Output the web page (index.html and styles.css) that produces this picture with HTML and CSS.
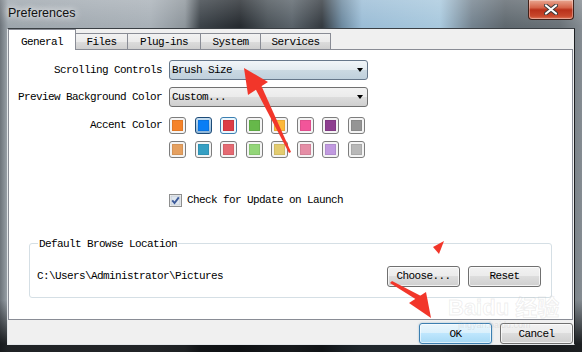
FILE: index.html
```html
<!DOCTYPE html>
<html lang="en">
<head>
  <meta charset="UTF-8">
  <title>Preferences</title>
  <link rel="stylesheet" href="styles.css">
</head>
<body>
  <div class="window">
    <div class="titlebar">
      <span class="title">Preferences</span>
      <div class="close">
        <svg width="14" height="11" viewBox="0 0 14 11">
          <path d="M2 1.5 L12 9.5 M12 1.5 L2 9.5" stroke="#3a3a3a" stroke-width="4" stroke-linecap="round"/>
          <path d="M2 1.5 L12 9.5 M12 1.5 L2 9.5" stroke="#fff" stroke-width="2.2" stroke-linecap="round"/>
        </svg>
      </div>
    </div>

    <div class="client">
      <div class="tabs">
        <div class="tab active">General</div>
        <div class="tab t-files">Files</div>
        <div class="tab t-plugins">Plug-ins</div>
        <div class="tab t-system">System</div>
        <div class="tab t-services">Services</div>
      </div>

      <div class="panel">
        <div class="row first">
          <label class="lbl">Scrolling Controls</label>
          <div class="combo hot"><span>Brush Size</span><i class="arrow"></i></div>
        </div>
        <div class="row second">
          <label class="lbl">Preview Background Color</label>
          <div class="combo"><span>Custom...</span><i class="arrow"></i></div>
        </div>
        <div class="row accent">
          <label class="lbl">Accent Color</label>
          <div class="swatches">
            <div class="sw"><i class="orange"></i></div>
            <div class="sw selected"><i class="blue"></i></div>
            <div class="sw hover"><i class="red"></i></div>
            <div class="sw"><i class="green"></i></div>
            <div class="sw"><i class="yellow"></i></div>
            <div class="sw"><i class="pink"></i></div>
            <div class="sw"><i class="purple"></i></div>
            <div class="sw"><i class="gray"></i></div>
            <div class="sw"><i class="orange-lt"></i></div>
            <div class="sw"><i class="teal"></i></div>
            <div class="sw"><i class="red-lt"></i></div>
            <div class="sw"><i class="green-lt"></i></div>
            <div class="sw"><i class="yellow-lt"></i></div>
            <div class="sw"><i class="pink-lt"></i></div>
            <div class="sw"><i class="purple-lt"></i></div>
            <div class="sw"><i class="gray-lt"></i></div>
          </div>
        </div>
        <div class="check">
          <svg width="13" height="13" viewBox="0 0 13 13">
            <rect x="0.5" y="0.5" width="12" height="12" fill="#f4f4f4" stroke="#8e8f8f"/>
            <rect x="2" y="2" width="9" height="9" fill="#dfe6ee" stroke="#b6bfca" stroke-width="0.6"/>
            <path d="M3.2 6.4 L5.5 9 L9.8 3.4" fill="none" stroke="#3c5a9a" stroke-width="1.9"/>
          </svg>
          <span>Check for Update on Launch</span>
        </div>

        <fieldset class="group">
          <legend>Default Browse Location</legend>
          <div class="browse">
            <span class="path">C:\Users\Administrator\Pictures</span>
            <button class="btn">Choose...</button>
            <button class="btn">Reset</button>
          </div>
        </fieldset>
      </div>

      <div class="footer">
        <button class="btn default">OK</button>
        <button class="btn">Cancel</button>
      </div>
    </div>

    <div class="watermark">Bai<b>du</b> 经验</div>
    <div class="watermark-url">jingyan.baidu.com</div>

    <!-- red annotation arrows drawn over the dialog -->
    <svg class="marks" width="582" height="352" viewBox="0 0 582 352">
      <polygon points="244,68 248,95 268,82" fill="#f2362a"/>
      <polygon points="255,88 261,85 291,152 289,153" fill="#f2362a"/>
      <polygon points="433,247 444,241 439,254" fill="#f2362a"/>
      <polygon points="390,283 392,281 421,296 417,300" fill="#f2362a"/>
      <polygon points="431,318 409,303 426,292" fill="#f2362a"/>
    </svg>
  </div>
</body>
</html>
```

FILE: styles.css
```css
body {
  margin: 0;
  background: #2a2f34;
}
.window {
  position: relative;
  width: 582px;
  height: 352px;
  box-sizing: border-box;
  padding: 0 7px 7px 7px;
  display: flex;
  flex-direction: column;
  overflow: hidden;
  background:
    linear-gradient(to bottom, rgba(255,255,255,0.18) 0, rgba(255,255,255,0) 26px, rgba(0,0,0,0) 300px, rgba(10,12,14,0.85) 344px),
    linear-gradient(to right, #6c737a 0, #9ea6ad 8px, #a9b1b8 150px, #8d959b 185px, #3c4349 200px, #262b30 240px, #4b5359 268px, #5a636a 292px, #343a40 322px, #6d8aa0 342px, #9bbdd6 362px, #a9c9de 440px, #74838f 472px, #5f686f 505px, #6a7278 560px, #858c92 582px);
}
.titlebar {
  height: 28px;
  flex: none;
  display: flex;
  justify-content: space-between;
  align-items: flex-start;
  padding-left: 1px;
}
.title {
  margin-top: 6px;
  font-family: "Liberation Sans", Arial, sans-serif;
  font-size: 12.5px;
  color: #111;
  text-shadow: 0 0 6px #fff, 0 0 10px rgba(255,255,255,0.8);
}
.close {
  width: 46px;
  height: 20px;
  box-sizing: border-box;
  margin-right: 1px;
  border: 1px solid #41211a;
  border-top: none;
  border-radius: 0 0 4px 4px;
  background: linear-gradient(#e9a791 0, #d56449 40%, #b9311a 52%, #c8482c 85%, #e07a5c 100%);
  box-shadow: inset 0 0 0 1px rgba(255,255,255,0.35);
  display: flex;
  justify-content: center;
  align-items: center;
}

.client {
  flex: 1;
  display: flex;
  flex-direction: column;
  background: #f0f0f0;
  border: 1px solid #e4e7ea;
  border-top-color: #3a3f44;
  border-right-color: #1c1f22;
  font-family: "Liberation Mono", monospace;
  font-size: 11px;
  letter-spacing: -0.6px;
  color: #000;
}

.tabs {
  height: 20px;
  flex: none;
  display: flex;
  align-items: flex-end;
  position: relative;
  z-index: 1;
}
.tab {
  height: 16px;
  box-sizing: border-box;
  border: 1px solid #898c95;
  border-bottom: none;
  border-left: none;
  background: linear-gradient(#f2f2f2 0, #ebebeb 50%, #dddddd 50%, #cfcfcf 100%);
  display: flex;
  justify-content: center;
  align-items: center;
  padding-top: 1px;
}
.tab.active {
  width: 68px;
  height: 21px;
  margin-bottom: -1px;
  border-left: 1px solid #898c95;
  background: #fff;
  padding-top: 3px;
}
.t-files { width: 52px; }
.t-plugins { width: 73px; }
.t-system { width: 60px; }
.t-services { width: 70px; }

.panel {
  height: 271px;
  flex: none;
  box-sizing: border-box;
  margin-right: 1px;
  border: 1px solid #898c95;
  background: #fff;
  display: flex;
  flex-direction: column;
}
.row {
  display: flex;
  align-items: center;
}
.row.first { margin-top: 10px; }
.row.second { margin-top: 7px; }
.row.accent {
  margin-top: 10px;
  align-items: flex-start;
}
.lbl {
  width: 153px;
  margin-right: 7px;
  text-align: right;
}
.accent .lbl { margin-top: 2px; }

.combo {
  width: 199px;
  height: 20px;
  box-sizing: border-box;
  border: 1px solid #707070;
  border-radius: 3px;
  padding: 0 4px 0 2px;
  background: linear-gradient(#f2f2f2 0, #ebebeb 50%, #dddddd 50%, #cfcfcf 100%);
  display: flex;
  justify-content: space-between;
  align-items: center;
}
.combo.hot {
  border-color: #66778a;
  background: linear-gradient(#f1f5f8 0, #e3ebf0 50%, #cbd9e2 50%, #bfd0dc 100%);
}
.arrow {
  width: 0;
  height: 0;
  border-top: 4px solid #000;
  border-left: 3.5px solid transparent;
  border-right: 3.5px solid transparent;
}

.swatches {
  display: grid;
  grid-template-columns: repeat(8, 17px);
  grid-auto-rows: 17px;
  column-gap: 8.5px;
  row-gap: 6.5px;
}
.sw {
  box-sizing: border-box;
  border: 1px solid #7d7d7d;
  border-radius: 3px;
  padding: 2px;
  background: #f4f4f4;
}
.sw i {
  display: block;
  height: 100%;
  box-shadow: inset 0 0 0 1px rgba(0,0,0,0.08);
}
.sw.selected {
  border-color: #1d4b77;
  background: linear-gradient(#c7def0, #8fb6d8);
}
.sw.hover {
  border-color: #3c7fb1;
  background: #eaf6fd;
}
.orange { background: #f5832a; }
.blue { background: #0a7ef5; }
.red { background: #dc3c46; }
.green { background: #66b84a; }
.yellow { background: #fdb83a; }
.pink { background: #f2559a; }
.purple { background: #8e3f90; }
.gray { background: #959595; }
.orange-lt { background: #e5a060; }
.teal { background: #359fc3; }
.red-lt { background: #e56a72; }
.green-lt { background: #93d679; }
.yellow-lt { background: #e3cc70; }
.pink-lt { background: #e58ea6; }
.purple-lt { background: #c19ae0; }
.gray-lt { background: #b8b8b8; }

.check {
  margin: 36px 0 0 160px;
  display: flex;
  align-items: center;
  gap: 5px;
}
.check svg { flex: none; }

.group {
  width: 523px;
  box-sizing: border-box;
  margin: 30px 0 0 20px;
  padding: 15px 10px 10px 7px;
  border: 1px solid #d5dfe5;
  border-radius: 3px;
}
.group legend {
  margin-left: 1px;
  padding: 0 1px;
  line-height: 14px;
}
.browse {
  display: flex;
  align-items: center;
  gap: 8px;
}
.path { flex: 1; }

.btn {
  width: 73px;
  height: 21px;
  box-sizing: border-box;
  border: 1px solid #707070;
  border-radius: 3px;
  background: linear-gradient(#f2f2f2 0, #ebebeb 50%, #dddddd 50%, #cfcfcf 100%);
  box-shadow: inset 0 0 0 1px rgba(255,255,255,0.7);
  font-family: "Liberation Mono", monospace;
  font-size: 11px;
  letter-spacing: -0.6px;
  color: #000;
  padding: 0;
}
.btn.default {
  border-color: #3c7fb1;
  background: linear-gradient(#eaf6fd 0, #d9f0fc 50%, #bee6fd 50%, #a7d9f5 100%);
  box-shadow: inset 0 0 0 1px rgba(255,255,255,0.6), 0 0 2px rgba(60,127,177,0.5);
}

.footer {
  flex: 1;
  display: flex;
  justify-content: flex-end;
  align-items: flex-start;
  gap: 8px;
  padding: 3px 1px 0 0;
}

.watermark {
  position: absolute;
  left: 448px;
  top: 296px;
  font-family: "Liberation Sans", "Noto Sans CJK SC", sans-serif;
  font-size: 22px;
  line-height: 24px;
  font-weight: bold;
  color: rgba(255,255,255,0.15);
  -webkit-text-stroke: 1px rgba(160,160,160,0.18);
  pointer-events: none;
  white-space: nowrap;
}
.watermark-url {
  position: absolute;
  left: 458px;
  top: 320px;
  font-family: "Liberation Sans", sans-serif;
  font-size: 9px;
  line-height: 10px;
  color: rgba(170,170,170,0.25);
  pointer-events: none;
}
.marks {
  position: absolute;
  left: 0;
  top: 0;
  pointer-events: none;
}
```
